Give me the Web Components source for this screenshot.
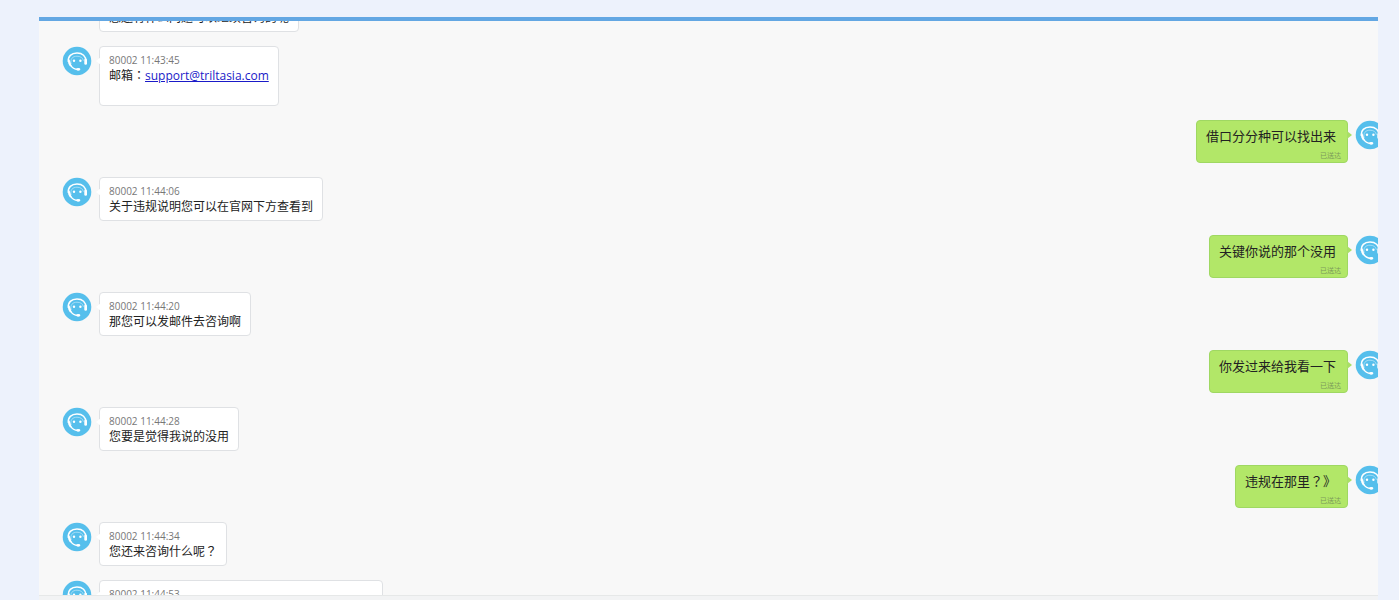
<!DOCTYPE html>
<html lang="zh-CN">
<head>
<meta charset="utf-8">
<title>聊天记录</title>
<style>
  html, body {
    height: 100%;
    margin: 0;
  }

  body {
    background: #edf2fc;
    font-family: "Open Sans", "Noto Sans CJK SC", sans-serif;
    overflow: hidden;
  }

  /* Centred full-width punctuation */
  [lang="zh-TW"] {
    font-family: "Open Sans", "Noto Sans CJK TC", sans-serif;
  }
</style>
</head>
<body>
<chat-window>
  <chat-message time="80002 11:43:40">您还有什么问题可以继续咨询的呢</chat-message>
  <chat-message time="80002 11:43:45">邮箱<span lang="zh-TW">：</span><a href="mailto:support@triltasia.com">support@triltasia.com</a><br><br></chat-message>
  <chat-message own status="已送达">借口分分种可以找出来</chat-message>
  <chat-message time="80002 11:44:06">关于违规说明您可以在官网下方查看到</chat-message>
  <chat-message own status="已送达">关键你说的那个没用</chat-message>
  <chat-message time="80002 11:44:20">那您可以发邮件去咨询啊</chat-message>
  <chat-message own status="已送达">你发过来给我看一下</chat-message>
  <chat-message time="80002 11:44:28">您要是觉得我说的没用</chat-message>
  <chat-message own status="已送达">违规在那里<span lang="zh-TW">？</span>》</chat-message>
  <chat-message time="80002 11:44:34">您还来咨询什么呢<span lang="zh-TW">？</span></chat-message>
  <chat-message time="80002 11:44:53">您可以先查看一下官网下方的说明内容再来咨询我</chat-message>
</chat-window>

<script>
/**
 * Round customer service avatar
 */
class ChatAvatar extends HTMLElement {
    constructor() {
        super();
        this.attachShadow({ mode: "open" });
        this.shadowRoot.innerHTML = `
    <style>
      :host {
        display: block;
        flex: none;
        width: 30px;
        height: 30px;
      }

      svg {
        display: block;
        width: 100%;
        height: 100%;
      }
    </style>
    <svg viewBox="0 0 30 30" aria-hidden="true">
      <circle cx="15" cy="15" r="14.3" fill="#56bfec"/>
      <path d="M6.4 16C5.6 10.4 9.4 7 15 7s9 3.2 8.800 8" fill="none" stroke="#fff" stroke-width="1.5"/>
      <path d="M9.2 18C7.9 13 10.6 10.2 15 10.2c3.6 0 6 1.8 6.4 4.6" fill="none" stroke="#b5e3f8" stroke-width=".8"/>
      <path d="M5.9 13.5h1.7l1.9 6.3-1.4.6C6.5 18.6 5.7 16.2 5.900 13.500z" fill="#fff"/>
      <rect x="22.3" y="12.8" width="2.7" height="6" rx="1.3" fill="#fff"/>
      <path d="M8.5 19c1.4 2.6 3.8 4.2 7.5 4.4" fill="none" stroke="#fff" stroke-width="1.5"/>
      <ellipse cx="16.3" cy="23.3" rx="2.1" ry="1.4" fill="#fff"/>
      <circle cx="12" cy="14.8" r="1.2" fill="#fff"/>
      <circle cx="18.4" cy="14.8" r="1.2" fill="#fff"/>
    </svg>
  `;
    }
}

/**
 * One message row: avatar, bubble and its tail.
 * Attributes: time, status, own (sent by the operator, right side)
 */
class ChatMessage extends HTMLElement {
    constructor() {
        super();
        this.attachShadow({ mode: "open" });
    }

    connectedCallback() {
        const time = this.getAttribute("time");
        const status = this.getAttribute("status");

        this.shadowRoot.innerHTML = `
    <style>
      :host {
        display: flex;
        align-items: flex-start;
        gap: 7px;
        padding: 0 24px 0 23px;
      }

      /* The right avatar runs past the edge of the window */
      :host([own]) {
        flex-direction: row-reverse;
        padding-right: 0;
        margin-right: -7px;
      }

      .bubble {
        position: relative;
        box-sizing: border-box;
        padding: 5px 9px;
        border: 1px solid #dfe1e4;
        border-radius: 4px;
        background: #fff;
        color: #222;
        font-size: 12px;
        line-height: 16px;
      }

      :host([own]) .bubble {
        padding: 6px 11px 0 9px;
        border-color: #9fd862;
        background: #b2e768;
        font-size: 13px;
        line-height: 18px;
      }

      .bubble::before {
        content: "";
        position: absolute;
        top: 10px;
        left: -4px;
        width: 5px;
        height: 8px;
        background: #fff;
        clip-path: polygon(0 50%, 100% 0, 100% 100%);
      }

      :host([own]) .bubble::before {
        left: auto;
        right: -5px;
        background: #a9df66;
        clip-path: polygon(100% 50%, 0 0, 0 100%);
      }

      time, .status {
        display: block;
        font-size: 10px;
        color: #777;
      }

      .status {
        margin: 4px -5px 0 0;
        font-size: 7px;
        line-height: 13px;
        text-align: right;
        color: #7c9a5a;
      }

      ::slotted(a) {
        color: #1a1ac8;
      }
    </style>
    <chat-avatar></chat-avatar>
    <div class="bubble">
      ${time ? `<time>${time}</time>` : ""}
      <div class="text"><slot></slot></div>
      ${status ? `<span class="status">${status}</span>` : ""}
    </div>
  `;
    }
}

/**
 * Panel with the message list, scrolled to the newest messages
 */
class ChatWindow extends HTMLElement {
    constructor() {
        super();
        this.attachShadow({ mode: "open" });
        this.shadowRoot.innerHTML = `
    <style>
      :host {
        display: flex;
        flex-direction: column;
        box-sizing: border-box;
        height: 100vh;
        padding: 17px 21px 0 39px;
      }

      .panel {
        flex: 1;
        min-height: 0;
        overflow: hidden;
        border-top: 4px solid #63a7e3;
        background: #f8f8f8;
      }

      .list {
        display: flex;
        flex-direction: column;
        gap: 14px;
        margin-top: -33px;
      }

      .footer {
        height: 4px;
        border-top: 1px solid #e6e8e8;
        background: #f2f3f4;
      }
    </style>
    <div class="panel"><div class="list"><slot></slot></div></div>
    <div class="footer"></div>
  `;
    }
}

customElements.define("chat-avatar", ChatAvatar);
customElements.define("chat-message", ChatMessage);
customElements.define("chat-window", ChatWindow);
</script>
</body>
</html>
